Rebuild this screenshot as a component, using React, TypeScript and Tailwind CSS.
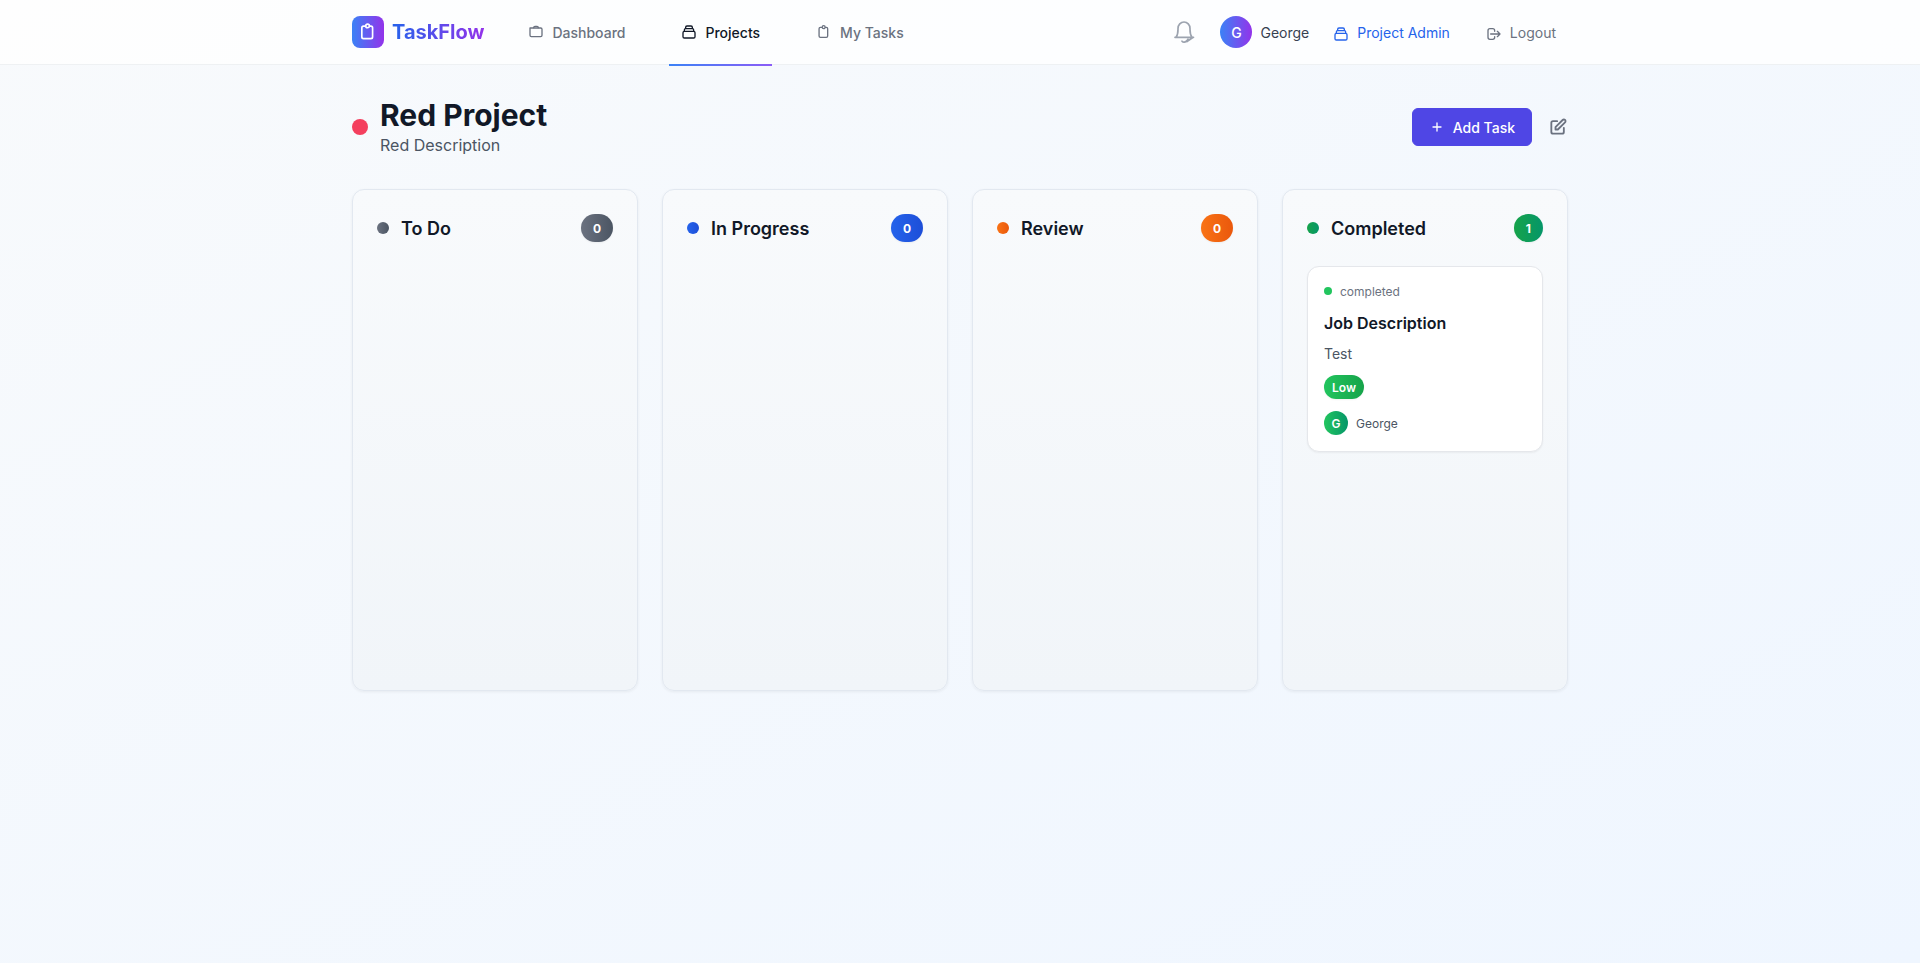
import type { ReactNode } from "react";

function Icon({ className, width = 2, children }: { className: string; width?: number; children: ReactNode }) {
  return (
    <svg className={className} fill="none" stroke="currentColor" strokeWidth={width} strokeLinecap="round" strokeLinejoin="round" viewBox="0 0 24 24">
      {children}
    </svg>
  );
}

const clipboard =
  "M8.700 5H6.600a2 2 0 00-2 2v11a2 2 0 002 2h8.900a2 2 0 002-2V7a2 2 0 00-2-2h-1.300M9.300 4.700a2.200 2.200 0 004.400 0a2.200 2.200 0 00-4.400 0";
const stack =
  "M19 11H5m14 0a2 2 0 012 2v6a2 2 0 01-2 2H5a2 2 0 01-2-2v-6a2 2 0 012-2m14 0V9a2 2 0 00-2-2M5 11V9a2 2 0 012-2m0 0V5a2 2 0 012-2h6a2 2 0 012 2v2M7 7h10";

const columns = [
  { title: "To Do", count: 0, tone: "from-[#6b7280] to-[#4b5563]" },
  { title: "In Progress", count: 0, tone: "from-[#2563eb] to-[#1d4ed8]" },
  { title: "Review", count: 0, tone: "from-[#f97316] to-[#ea580c]" },
  { title: "Completed", count: 1, tone: "from-[#16a34a] to-[#059669]" },
];

function Header() {
  return (
    <header className="h-[65px] border-b border-[#e5e7eb]/60 bg-white/80">
      <div className="mx-auto flex h-16 max-w-7xl justify-between px-8">
        <div className="flex">
          <div className="flex items-center gap-2">
            <div className="flex size-8 items-center justify-center rounded-lg bg-linear-to-r/srgb from-[#3b82f6] to-[#9333ea] text-white">
              <Icon className="size-5"><path d={clipboard} /></Icon>
            </div>
            <span className="bg-linear-to-r/srgb from-[#2563eb] to-[#9333ea] bg-clip-text text-xl font-bold text-transparent">TaskFlow</span>
          </div>
          <nav className="ml-8 flex gap-8 text-sm font-medium text-[#6b7280]">
            <a className="flex items-center gap-2 px-3">
              <Icon className="size-4">
                <path d="M3 6v11a2 2 0 002 2h14a2 2 0 002-2V8a2 2 0 00-2-2H3z" />
                <path d="M8.500 5.500a2 2 0 012-2h3a2 2 0 012 2" />
              </Icon>
              <span className="translate-y-px">Dashboard</span>
            </a>
            <a className="relative flex items-center gap-2 px-3 text-[#111827]">
              <Icon className="size-4"><path d={stack} /></Icon>
              <span className="translate-y-px">Projects</span>
              <span className="absolute inset-x-0 top-16 h-0.5 bg-linear-to-r/srgb from-[#3b82f6] to-[#8b5cf6]" />
            </a>
            <a className="flex items-center gap-2 px-3">
              <Icon className="size-4"><path d={clipboard} /></Icon>
              <span className="translate-y-px">My Tasks</span>
            </a>
          </nav>
        </div>
        <div className="flex items-center gap-6 text-sm">
          <Icon className="size-6 text-[#9ca3af]" width={1.7}>
            <path d="M3 17.300h18.500M4 17.300C5.800 15 6 13 6 9.500V8.500a6 6.500 0 0112 0v1c0 3.500.2 5.500 2 7.800M20.500 17.800l-5.500 3.700M10 21.200c1.200 1.400 3.500 1.300 5.200-.8l.8-1.200" />
          </Icon>
          <div className="flex items-center gap-2">
            <div className="flex size-8 items-center justify-center rounded-full bg-linear-to-r/srgb from-[#3b82f6] to-[#9333ea] font-medium text-white">
              <span className="translate-y-px">G</span>
            </div>
            <span className="translate-y-px text-[#374151]">George</span>
          </div>
          <a className="flex items-center gap-2 text-[#2563eb]">
            <Icon className="mt-[3px] size-4"><path d={stack} /></Icon>
            <span className="translate-y-px">Project Admin</span>
          </a>
          <a className="flex items-center gap-2 px-3 text-[#6b7280]">
            <Icon className="mt-[3px] size-4">
              <path d="M17 16l4-4m0 0l-4-4m4 4H7m6 4v1a3 3 0 01-3 3H6a3 3 0 01-3-3V7a3 3 0 013-3h4a3 3 0 013 3v1" />
            </Icon>
            <span className="translate-y-px">Logout</span>
          </a>
        </div>
      </div>
    </header>
  );
}

function TaskCard() {
  return (
    <article className="rounded-xl border border-[#e5e7eb] bg-white p-4 shadow-xs">
      <div className="mb-3 flex items-center gap-2 text-xs text-[#6b7280]">
        <span className="size-2 rounded-full bg-[#22c55e]" />
        <span className="translate-y-px">completed</span>
      </div>
      <h4 className="mb-2 font-semibold text-[#111827]">Job Description</h4>
      <p className="mb-3 translate-y-px text-sm text-[#4b5563]">Test</p>
      <div className="mb-3 flex">
        <span className="rounded-full bg-linear-to-r/srgb from-[#22c55e] to-[#16a34a] px-2 py-1 text-xs font-semibold text-white shadow-xs">
          <span className="block translate-y-px">Low</span>
        </span>
      </div>
      <div className="flex items-center gap-2 text-xs text-[#4b5563]">
        <span className="flex size-6 items-center justify-center rounded-full bg-linear-to-r/srgb from-[#22c55e] to-[#059669] font-semibold text-white">
          <span className="translate-y-px">G</span>
        </span>
        <span className="translate-y-px">George</span>
      </div>
    </article>
  );
}

export default function App() {
  return (
    <div className="min-h-screen bg-linear-to-br/srgb from-[#f8fafc] to-[#eff6ff] font-['Inter',sans-serif]">
      <Header />
      <main className="mx-auto max-w-7xl px-8 py-8">
        <div className="mb-8 flex items-center justify-between">
          <div className="flex items-center gap-3">
            <span className="size-4 rounded-full bg-[#f43f5e]" />
            <div>
              <h1 className="text-3xl font-bold text-[#111827]">Red Project</h1>
              <p className="text-[#4b5563]">Red Description</p>
            </div>
          </div>
          <div className="flex items-center gap-4">
            <button className="flex items-center gap-2 rounded-md border border-[#4f46e5] bg-[#4f46e5] px-4 py-2 text-sm font-medium text-white">
              <Icon className="size-4"><path d="M12 6v12M6 12h12" /></Icon>
              <span className="translate-y-px">Add Task</span>
            </button>
            <Icon className="size-5 text-[#6b7280]" width={2.2}>
              <path d="M11 5H6a2 2 0 00-2 2v11a2 2 0 002 2h11a2 2 0 002-2v-5m-1.414-9.414a2 2 0 112.828 2.828L11.828 15H9v-2.828l8.586-8.586z" />
            </Icon>
          </div>
        </div>
        <div className="grid grid-cols-4 gap-6">
          {columns.map((c) => (
            <section key={c.title} className="min-h-[502px] rounded-xl border border-[#e2e8f0] bg-linear-to-b/srgb from-[#f8fafc] to-[#f1f5f9] p-6 shadow-[0_1px_3px_rgba(0,0,0,0.06)]">
              <div className="mb-6 flex items-center justify-between">
                <div className="flex items-center gap-3">
                  <span className={`size-3 rounded-full bg-linear-to-r/srgb ${c.tone}`} />
                  <h3 className="translate-y-px text-lg font-semibold text-[#111827]">{c.title}</h3>
                </div>
                <span className={`rounded-full bg-linear-to-r/srgb px-3 py-1.5 text-xs font-bold text-white shadow-xs ${c.tone}`}>
                  <span className="block translate-y-px">{c.count}</span>
                </span>
              </div>
              {c.count > 0 && <TaskCard />}
            </section>
          ))}
        </div>
      </main>
    </div>
  );
}
